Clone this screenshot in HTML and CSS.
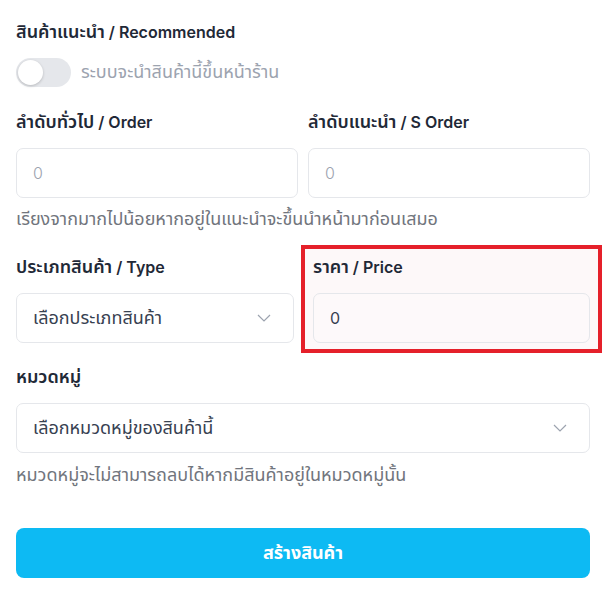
FILE: index.html
```html
<!DOCTYPE html>
<html lang="th">
<head>
    <meta charset="UTF-8">
    <meta name="viewport" content="width=device-width, initial-scale=1.0">
    <title>สร้างสินค้า</title>
    <link rel="stylesheet" href="styles.css">
</head>
<body>
    <form class="product-form">
        <div class="field">
            <label class="label"><span class="th">สินค้าแนะนำ</span> / Recommended</label>
            <div class="toggle-row">
                <span class="toggle"><span class="knob"></span></span>
                <span class="toggle-text th">ระบบจะนำสินค้านี้ขึ้นหน้าร้าน</span>
            </div>
        </div>

        <div class="field">
            <div class="two-col">
                <div>
                    <label class="label"><span class="th">ลำดับทั่วไป</span> / Order</label>
                    <div class="input placeholder">0</div>
                </div>
                <div>
                    <label class="label"><span class="th">ลำดับแนะนำ</span> / S Order</label>
                    <div class="input placeholder">0</div>
                </div>
            </div>
            <p class="help th">เรียงจากมากไปน้อยหากอยู่ในแนะนำจะขึ้นนำหน้ามาก่อนเสมอ</p>
        </div>

        <div class="type-row">
            <div class="type-col">
                <label class="label"><span class="th">ประเภทสินค้า</span> / Type</label>
                <div class="input select">
                    <span class="th">เลือกประเภทสินค้า</span>
                    <svg class="chevron" width="14" height="8" viewBox="0 0 14 8"><path d="M1 1l6 6 6-6" fill="none" stroke="#9ca3af" stroke-width="1.2"/></svg>
                </div>
            </div>
            <div class="price-box">
                <label class="label"><span class="th">ราคา</span> / Price</label>
                <div class="input value">0</div>
            </div>
        </div>

        <div class="field">
            <label class="label th">หมวดหมู่</label>
            <div class="input select">
                <span class="th">เลือกหมวดหมู่ของสินค้านี้</span>
                <svg class="chevron" width="14" height="8" viewBox="0 0 14 8"><path d="M1 1l6 6 6-6" fill="none" stroke="#9ca3af" stroke-width="1.2"/></svg>
            </div>
            <p class="help th">หมวดหมู่จะไม่สามารถลบได้หากมีสินค้าอยู่ในหมวดหมู่นั้น</p>
        </div>

        <button type="button" class="submit"><span class="th">สร้างสินค้า</span></button>
    </form>
</body>
</html>
```

FILE: styles.css
```css
body {
    margin: 0;
    background: #fff;
    font-family: Inter, "Noto Sans Thai", "Noto Sans Thai UI", "Noto Sans", sans-serif;
    color: #1f2937;
}
.product-form {
    width: 574px;
    padding: 20px 16px;
}
/* thai glyphs run a little larger than the latin ones */
.th {
    font-size: 18px;
}
.label {
    display: block;
    font-size: 16px;
    font-weight: 600;
    line-height: 24px;
    margin-bottom: 14px;
}
.label.th {
    font-size: 18px;
}
.toggle-row {
    display: flex;
    align-items: center;
    gap: 10px;
    height: 29px;
    margin-bottom: 23px;
}
.toggle {
    width: 55px;
    height: 29px;
    border-radius: 15px;
    background: #e5e7eb;
    position: relative;
}
.knob {
    position: absolute;
    left: 2px;
    top: 2px;
    width: 25px;
    height: 25px;
    border-radius: 50%;
    background: #fff;
    box-shadow: 0 1px 3px rgba(0, 0, 0, 0.2);
}
.toggle-text {
    color: #9ca3af;
}
.two-col {
    display: grid;
    grid-template-columns: 1fr 1fr;
    gap: 10px;
}
.input {
    box-sizing: border-box;
    height: 50px;
    border: 1px solid #e5e7eb;
    border-radius: 7px;
    background: #fff;
    padding: 0 16px;
    display: flex;
    align-items: center;
    font-size: 16px;
    color: #374151;
}
.placeholder {
    color: #9ca3af;
    font-weight: 300;
}
.select {
    justify-content: space-between;
}
.chevron {
    margin-right: 6px;
}
.help {
    margin: 9px 0 14px;
    line-height: 24px;
    color: #71757d;
}
.type-row {
    display: grid;
    grid-template-columns: 278px 301px;
    gap: 7px;
    margin-bottom: 12px;
}
.type-col {
    padding: 10px 0;
}
.price-box {
    border: 4px solid #e5202a;
    background: #fdf8f9;
    padding: 6px 8px;
}
.price-box .input {
    background: #fdf9fa;
}
.field:last-of-type .help {
    margin: 10px 0 41px;
}
.submit {
    display: block;
    width: 100%;
    height: 50px;
    border: none;
    border-radius: 8px;
    background: #0dbaf3;
    color: #fff;
    font-family: inherit;
    font-size: 16px;
    font-weight: 700;
    cursor: pointer;
}
```
